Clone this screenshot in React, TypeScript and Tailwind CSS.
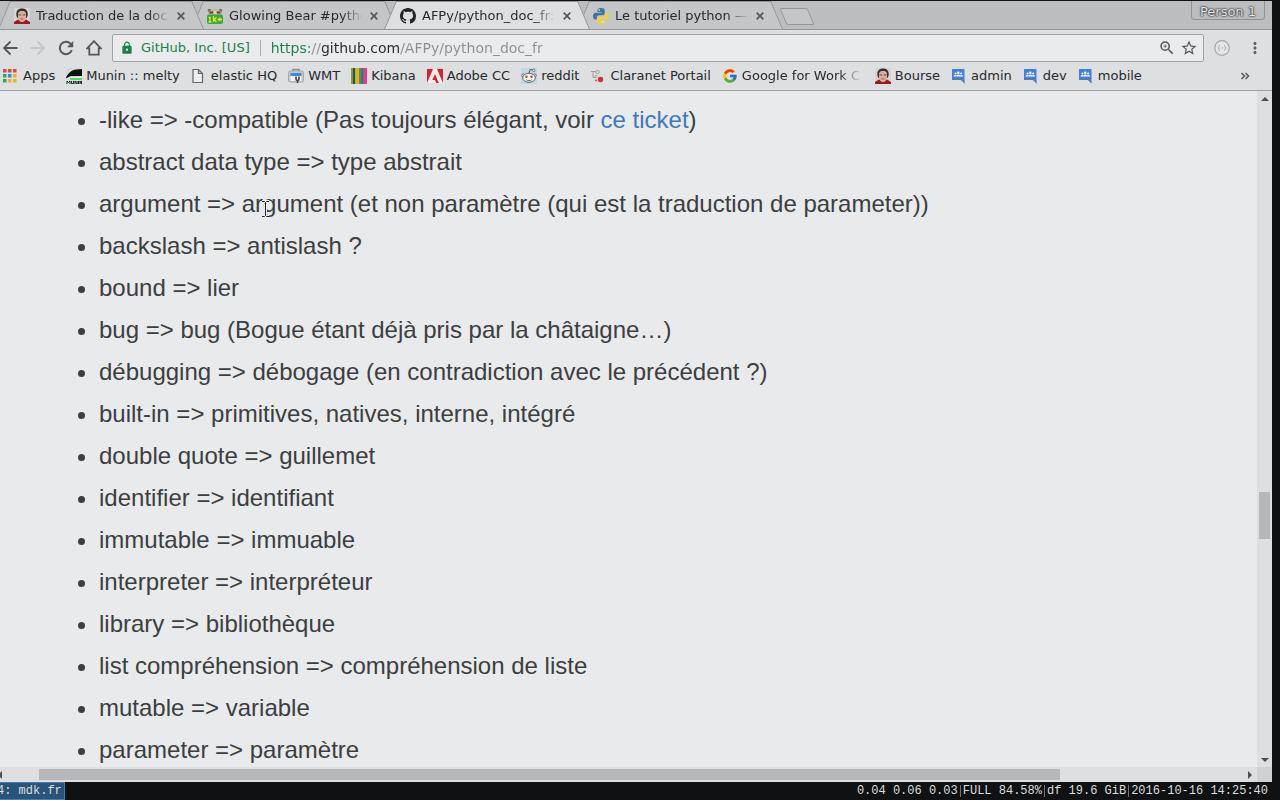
import type { ReactNode } from "react";
import { FcGoogle } from "react-icons/fc";
import { MdLock, MdMoreVert, MdStarBorder, MdZoomIn } from "react-icons/md";

const svgClass = "block size-4 shrink-0";

function FaceIcon() {
  return (
    <svg viewBox="0 0 16 16" className={svgClass} aria-hidden="true">
      <rect width="16" height="16" fill="#d5d5d6" />
      <path d="M0 16v-2l4-2.500 4 1 4-1 4 2.500v2z" fill="#9b1c20" />
      <path d="M6 10h4v3l-2 1-2-1z" fill="#b98470" />
      <path d="M2.500 8C1.500 3 4 .5 8 .5s6.500 2.500 5.500 7.500l-1 2h-9z" fill="#3a2e2e" />
      <path d="M4 5l2-2h4l2 2v5c0 2.200-2 4-4 4S4 12.200 4 10z" fill="#d9ae9d" />
      <path d="M4.500 6.300h2.700v1.200H4.500zM8.800 6.300h2.700v1.200H8.800z" fill="#7b605a" />
      <path d="M6.500 11h3" stroke="#8f4a42" strokeWidth=".8" />
    </svg>
  );
}

function BearIcon() {
  return (
    <svg viewBox="0 0 16 16" className={svgClass} aria-hidden="true">
      <circle cx="2.500" cy="2.500" r="1.800" fill="#7c6a58" />
      <circle cx="13.500" cy="2.500" r="1.800" fill="#7c6a58" />
      <path d="M1 8c0-5 3-7 7-7s7 2 7 7z" fill="#c3b29b" />
      <path d="M2.500 4.500h4M9.500 4.500h4" stroke="#584536" strokeWidth="1.800" />
      <rect x="6.500" y="3" width="3" height="3" fill="#e0d5c5" />
      <rect y="6.500" width="16" height="9.500" rx="2" fill="#3aa63c" />
      <path d="M1.500 9.500H3V14M1.500 14h3M6.500 8v6M9.500 9.500L7 11.500 9.500 14M10.500 11.500h4.500M12.800 9.500v4" fill="none" stroke="#dff022" strokeWidth="1.300" />
    </svg>
  );
}

function GithubIcon() {
  return (
    <svg viewBox="0 0 16 16" className={svgClass} aria-hidden="true">
      <path
        fill="#222527"
        d="M8 0C3.58 0 0 3.58 0 8c0 3.54 2.29 6.53 5.47 7.59.4.07.55-.17.55-.38 0-.19-.01-.82-.01-1.49-2.01.37-2.53-.49-2.69-.94-.09-.23-.48-.94-.82-1.13-.28-.15-.68-.52-.01-.53.63-.01 1.080.58 1.230.82.72 1.210 1.870.87 2.330.66.07-.52.28-.87.51-1.070-1.780-.2-3.640-.89-3.640-3.950 0-.87.31-1.590.82-2.150-.08-.2-.36-1.020.08-2.120 0 0 .67-.21 2.200.82.64-.18 1.320-.27 2-.27.68 0 1.360.09 2 .27 1.530-1.040 2.200-.82 2.200-.82.44 1.100.16 1.920.08 2.120.51.56.82 1.270.82 2.150 0 3.070-1.870 3.750-3.650 3.950.29.25.54.73.54 1.480 0 1.070-.01 1.930-.01 2.200 0 .21.15.46.55.38A8.013 8.013 0 0 0 16 8c0-4.420-3.580-8-8-8z"
      />
    </svg>
  );
}

function PythonIcon() {
  return (
    <svg viewBox="0 0 16 16" className={svgClass} aria-hidden="true">
      <path d="M8 0C5 0 4.500 1 4.500 2.200V4h4v.7H2.300C1 4.700 0 6 0 8.200s1 3.300 2.200 3.300h1.600V9.400c0-1.200 1-2.200 2.200-2.200h3.700c1.100 0 2-.9 2-2V2.200C11.700.8 10.500 0 8 0z" fill="#3b74a8" />
      <path d="M8 16c3 0 3.500-1 3.500-2.200V12h-4v-.7h6.200c1.300 0 2.300-1.300 2.300-3.500s-1-3.300-2.200-3.300h-1.600v2.100c0 1.200-1 2.200-2.200 2.200H6.300c-1.100 0-2 .9-2 2v3C4.300 15.200 5.500 16 8 16z" fill="#f4cf45" />
      <circle cx="6.200" cy="2.100" r=".8" fill="#e7ebee" />
      <circle cx="9.800" cy="13.900" r=".8" fill="#f5f0dc" />
    </svg>
  );
}

function AppsIcon() {
  const rows = [
    ["#d84b43", "#d84b43", "#d84b43"],
    ["#2fa567", "#4285dd", "#e7b527"],
    ["#2fa567", "#e7b527", "#e7b527"],
  ];
  return (
    <svg viewBox="0 0 16 16" className={svgClass} aria-hidden="true">
      {rows.map((row, y) => row.map((fill, x) => <rect key={`${x}-${y}`} x={x * 5} y={1 + y * 5} width="3.500" height="3.500" fill={fill} />))}
    </svg>
  );
}

function MuninIcon() {
  return (
    <svg viewBox="0 0 16 16" className={svgClass} aria-hidden="true">
      <rect width="16" height="16" fill="#d8dada" />
      <path d="M0 9.500C3 4 6 2 10 1.500L16 1v7H9L5 8 0 11z" fill="#111" />
      <path d="M0 11l4-2 3 1 9-1" stroke="#f1f1f1" fill="none" />
      <path d="M4 11h12" stroke="#4edf59" strokeWidth="2" />
      <path d="M1 16v-3l1.500 1.500L4 13v3M5.500 13v2.500h2V13M9 16v-3l2 3v-3M12.500 13v3M14 16v-3l1.500 3v-3" stroke="#242424" fill="none" />
    </svg>
  );
}

function PageIcon() {
  return (
    <svg viewBox="0 0 16 16" className={svgClass} aria-hidden="true">
      <path d="M2 1.500h5.500L11.500 5.500v9H2zM7.500 1.500v4h4" fill="#eceeef" stroke="#626466" strokeWidth="1.200" />
    </svg>
  );
}

function WmtIcon() {
  return (
    <svg viewBox="0 0 16 16" className={svgClass} aria-hidden="true">
      <path d="M5 3V1.500h6V3" fill="none" stroke="#8b8f92" strokeWidth="1.500" />
      <rect x=".5" y="3" width="15" height="11" rx="1.500" fill="#c6cacc" stroke="#a4a8ab" />
      <rect x="2.500" y="5" width="11" height="3" fill="#4285e8" />
      <rect x="2.500" y="8" width="11" height="5" fill="#eef0f1" />
      <path d="M8 8.500v2.500c0 1 .8 1.500 1.500 1.500s1.500-.5 1.500-1.500V8.500M9.500 12.500V15" fill="none" stroke="#3e4246" strokeWidth="1.600" />
    </svg>
  );
}

function KibanaIcon() {
  const bars = [
    ["#7b9c3f", 0, 2],
    ["#1d5a35", 2, 2],
    ["#b7ad33", 4, 1],
    ["#e6aa2d", 5, 3],
    ["#4b9a45", 8, 2],
    ["#21808d", 10, 2],
    ["#df3d88", 12, 4],
  ] as const;
  return (
    <svg viewBox="0 0 16 16" className={svgClass} aria-hidden="true">
      {bars.map(([fill, x, width]) => (
        <rect key={x} x={x} width={width} height="16" fill={fill} />
      ))}
    </svg>
  );
}

function AdobeIcon() {
  return (
    <svg viewBox="0 0 16 16" className={svgClass} aria-hidden="true">
      <rect width="16" height="14" y="1" fill="#f2eded" />
      <path d="M0 1h6L0 15zM10 1h6v14zM8 6l3.800 9H9.300l-1.200-3H5.300z" fill="#db1f2d" />
    </svg>
  );
}

function RedditIcon() {
  return (
    <svg viewBox="0 0 16 16" className={svgClass} aria-hidden="true">
      <rect width="16" height="16" fill="#c3d8e6" />
      <path d="M8 5.500l1-4 3.500.7" fill="none" stroke="#54585a" />
      <circle cx="12.700" cy="2.300" r="1.300" fill="#f5f5f5" stroke="#54585a" strokeWidth=".8" />
      <circle cx="2.300" cy="7.500" r="1.600" fill="#eee" stroke="#54585a" strokeWidth=".8" />
      <circle cx="13.700" cy="7.500" r="1.600" fill="#eee" stroke="#54585a" strokeWidth=".8" />
      <ellipse cx="8" cy="9.800" rx="6.300" ry="4.500" fill="#f4f4f4" stroke="#54585a" strokeWidth=".9" />
      <circle cx="5.500" cy="8.800" r="1.300" fill="#de4829" />
      <circle cx="10.500" cy="8.800" r="1.300" fill="#de4829" />
      <path d="M5.200 11.800c1.600 1.200 4 1.200 5.600 0" fill="none" stroke="#54585a" strokeWidth=".9" />
    </svg>
  );
}

function ClaranetIcon() {
  return (
    <svg viewBox="0 0 16 16" className={svgClass} aria-hidden="true">
      <path d="M1 3.500h5M3 3.500v6h3" fill="none" stroke="#a39c9b" />
      <circle cx="7.500" cy="4" r="1.700" fill="#dedede" stroke="#a39c9b" />
      <circle cx="6" cy="8.500" r="1.200" fill="#dedede" stroke="#a39c9b" strokeWidth=".8" />
      <circle cx="10.500" cy="11.500" r="2.700" fill="#cc3039" />
      <circle cx="6" cy="12.500" r="1.100" fill="#a86a6b" />
    </svg>
  );
}

function GroupIcon() {
  return (
    <svg viewBox="0 0 16 16" className={svgClass} aria-hidden="true">
      <path d="M1 1h12.500v14.500L10 12H1z" fill="#3f7fe6" />
      <path d="M1 12h9l3.500 3.500V13L11 10.500H1z" fill="#6c757d" opacity=".6" />
      <circle cx="4.500" cy="5.500" r="1" fill="#fff" />
      <circle cx="7.300" cy="4.700" r="1.200" fill="#fff" />
      <circle cx="10.100" cy="5.500" r="1" fill="#fff" />
      <path d="M2.500 8.500c0-2 3-2 3-.6 0-2 3.600-2 3.600 0 0-1.400 3-1.400 3 .6z" fill="#fff" />
    </svg>
  );
}

function StrokeIcon({ d }: { d: string }) {
  return (
    <svg viewBox="0 0 16 16" className={svgClass} aria-hidden="true">
      <path d={d} fill="none" stroke="currentColor" strokeWidth="1.800" />
    </svg>
  );
}

function ReloadIcon() {
  return (
    <svg viewBox="0 0 16 16" className={svgClass} aria-hidden="true">
      <path d="M13.800 10.200A6.200 6.200 0 1 1 12.600 3.800L14 5.200" fill="none" stroke="currentColor" strokeWidth="2" />
      <path d="M15.200 1v6.200H9z" fill="currentColor" />
    </svg>
  );
}

function BracesIcon() {
  return (
    <svg viewBox="0 0 16 16" className={svgClass} aria-hidden="true">
      <circle cx="8" cy="8" r="7.300" fill="#e4e6e7" stroke="#a2a4a6" strokeWidth="1.200" />
      <path d="M6 5.500c-1.500 0-.6 2.300-2 2.500 1.400.2.500 2.500 2 2.500M10 5.500c1.500 0 .6 2.300 2 2.500-1.400.2-.5 2.500-2 2.500M7.300 8h1.400" fill="none" stroke="#a2a4a6" strokeWidth="1" />
    </svg>
  );
}

type TabProps = { title: string; icon: ReactNode; active?: boolean; layer: string };

function Tab({ title, icon, active = false, layer }: TabProps) {
  const side = active ? "border-[#8f9193] bg-[#dddfe0]" : "border-[#949698] bg-[#c4c6c7]";
  return (
    <div className={`relative -mr-[13px] h-7 w-[206px] shrink ${layer}`}>
      <span className={`absolute inset-y-0 left-1.5 w-1/2 -skew-x-[23deg] border-t border-l ${side}`} />
      <span className={`absolute inset-y-0 right-1.5 w-1/2 skew-x-[23deg] border-t border-r ${side}`} />
      <div className="relative flex h-full items-center pt-0.5 pl-4">
        <button type="button" role="tab" aria-selected={active} className="flex items-center gap-1.5 text-left">
          {icon}
          <span className="w-[134px] whitespace-nowrap [mask-image:linear-gradient(to_right,black_112px,transparent_134px)]">{title}</span>
        </button>
        <button type="button" aria-label={`Close ${title}`} className="ml-[3px] flex size-4 items-center justify-center">
          <svg viewBox="0 0 8 8" className="size-2" aria-hidden="true">
            <path d="M.7.7l6.600 6.600M7.300.7L.7 7.300" stroke="#55585a" strokeWidth="1.700" />
          </svg>
        </button>
      </div>
    </div>
  );
}

const bookmarks: { label: string; icon: ReactNode; clipped?: boolean }[] = [
  { label: "Apps", icon: <AppsIcon /> },
  { label: "Munin :: melty", icon: <MuninIcon /> },
  { label: "elastic HQ", icon: <PageIcon /> },
  { label: "WMT", icon: <WmtIcon /> },
  { label: "Kibana", icon: <KibanaIcon /> },
  { label: "Adobe CC", icon: <AdobeIcon /> },
  { label: "reddit", icon: <RedditIcon /> },
  { label: "Claranet Portail", icon: <ClaranetIcon /> },
  { label: "Google for Work C", icon: <FcGoogle className={svgClass} />, clipped: true },
  { label: "Bourse", icon: <FaceIcon /> },
  { label: "admin", icon: <GroupIcon /> },
  { label: "dev", icon: <GroupIcon /> },
  { label: "mobile", icon: <GroupIcon /> },
];

const terms: ReactNode[] = [
  <>
    -like =&gt; -compatible (Pas toujours élégant, voir{" "}
    <a href="#ticket" className="text-[#4078c0]">
      ce ticket
    </a>
    )
  </>,
  "abstract data type => type abstrait",
  "argument => argument (et non paramètre (qui est la traduction de parameter))",
  "backslash => antislash ?",
  "bound => lier",
  "bug => bug (Bogue étant déjà pris par la châtaigne…)",
  "débugging => débogage (en contradiction avec le précédent ?)",
  "built-in => primitives, natives, interne, intégré",
  "double quote => guillemet",
  "identifier => identifiant",
  "immutable => immuable",
  "interpreter => interpréteur",
  "library => bibliothèque",
  "list compréhension => compréhension de liste",
  "mutable => variable",
  "parameter => paramètre",
];

function Arrow({ d, label, className }: { d: string; label: string; className: string }) {
  return (
    <button type="button" aria-label={label} className={`flex shrink-0 items-center justify-center ${className}`}>
      <svg viewBox="0 0 8 8" className="size-2" aria-hidden="true">
        <path d={d} fill="#4c4e50" />
      </svg>
    </button>
  );
}

export default function App() {
  return (
    <div className="flex h-screen flex-col overflow-hidden bg-[#101112] pt-px font-['DejaVu_Sans',sans-serif] text-[13px] text-[#27292b]">
      <div className="mr-2 flex min-h-0 flex-1 flex-col bg-[#dddfe0]">
        <header className="shrink-0">
          <div className="relative flex h-[29px] items-end border-b border-[#949698] bg-[#bbbdbf]">
            <div role="tablist" className="-ml-0.5 flex h-7 min-w-0">
              <Tab title="Traduction de la doc" icon={<FaceIcon />} layer="z-30" />
              <Tab title="Glowing Bear #pytho" icon={<BearIcon />} layer="z-20" />
              <Tab title="AFPy/python_doc_fr:" icon={<GithubIcon />} active layer="z-40" />
              <Tab title="Le tutoriel python —" icon={<PythonIcon />} layer="z-10" />
            </div>
            <button type="button" aria-label="New tab" className="mb-1 ml-[13px] h-[17px] w-7 skew-x-[23deg] rounded-xs border border-[#949698] bg-[#c4c6c7]" />
            <button
              type="button"
              className="mr-[7px] mb-auto ml-auto h-[19px] rounded-b border border-t-0 border-[#8f9193] px-2 pt-1 leading-[14px] text-[#e3e5e6] [text-shadow:0_0_1px_#333,0_0_2px_#333,0_0_2px_#333]"
            >
              Person 1
            </button>
          </div>

          <div className="flex h-9 items-center text-[#55585a]">
            <button type="button" aria-label="Back" className="ml-0.5">
              <StrokeIcon d="M15.500 8H2M8.500 1.500L2 8l6.500 6.500" />
            </button>
            <button type="button" aria-label="Forward" className="ml-3 text-[#c4c6c8]">
              <StrokeIcon d="M.5 8H14M7.500 1.500L14 8l-6.500 6.500" />
            </button>
            <button type="button" aria-label="Reload" className="ml-3">
              <ReloadIcon />
            </button>
            <button type="button" aria-label="Home" className="ml-3">
              <StrokeIcon d="M8 1.200L1.200 8.300H3.300V14.700H12.700V8.300H14.800z" />
            </button>
            <div className="ml-2.5 flex h-7 min-w-0 flex-1 items-center rounded-xs border border-[#a0a2a4] bg-[#e9ebec] pr-[5px] text-[14px]">
              <MdLock className="ml-[7px] size-3.5 text-[#19804a]" />
              <span className="ml-[7px] text-[13px] whitespace-nowrap text-[#19804a]">GitHub, Inc. [US]</span>
              <span className="mx-2.5 h-4 w-px bg-[#abadaf]" />
              <input
                type="text"
                aria-label="Address"
                defaultValue="https://github.com/AFPy/python_doc_fr"
                className="min-w-0 flex-1 bg-[linear-gradient(to_right,#19804a_41px,#8c8e90_41px,#8c8e90_51px,#27292b_51px,#27292b_129px,#8c8e90_129px)] bg-clip-text text-transparent outline-none"
              />
              <button type="button" aria-label="Zoom">
                <MdZoomIn className="size-[18px]" />
              </button>
              <button type="button" aria-label="Bookmark this page" className="ml-1">
                <MdStarBorder className="size-[18px]" />
              </button>
            </div>
            <button type="button" aria-label="JSON viewer" className="ml-2.5">
              <BracesIcon />
            </button>
            <button type="button" aria-label="Menu" className="mr-2 ml-4">
              <MdMoreVert className="size-[18px]" />
            </button>
          </div>

          <nav aria-label="Bookmarks" className="flex h-[25px] items-start gap-[11px] border-b border-[#a0a2a4] pt-0.5 pl-[3px]">
            {bookmarks.map(({ label, icon, clipped }) => (
              <a key={label} href="#bookmark" className="flex h-4 shrink-0 items-center gap-1 whitespace-nowrap">
                {icon}
                {clipped ? (
                  <span className="w-[122px] [mask-image:linear-gradient(to_right,black_97px,transparent_120px)]">{label}</span>
                ) : (
                  label
                )}
              </a>
            ))}
            <button type="button" aria-label="More bookmarks" className="mr-[22px] ml-auto h-4 text-[#55585a]">
              <svg viewBox="0 0 10 8" className="h-2 w-2.5" aria-hidden="true">
                <path d="M1.500 1l3 3-3 3M5.500 1l3 3-3 3" fill="none" stroke="currentColor" strokeWidth="1.500" />
              </svg>
            </button>
          </nav>
        </header>

        <div className="flex min-h-0 flex-1">
          <main className="relative min-w-0 flex-1 overflow-hidden bg-[#e8eaeb] pt-2 pl-[99px] font-['Liberation_Sans',sans-serif] text-[24px] leading-[42px] text-[#3c3e40]">
            <ul className="list-disc">
              {terms.map((term, i) => (
                <li key={i}>{term}</li>
              ))}
            </ul>
            <svg viewBox="0 0 9 18" className="absolute top-[109px] left-[261px] h-[18px] w-[9px]" aria-hidden="true">
              <path d="M1 1.500h2.500l1 1 1-1H8M4.500 2.500v13M1 16.500h2.500l1-1 1 1H8" fill="none" stroke="#eee" strokeWidth="3" />
              <path d="M1 1.500h2.500l1 1 1-1H8M4.500 2.500v13M1 16.500h2.500l1-1 1 1H8" fill="none" stroke="#222" strokeWidth="1" />
            </svg>
          </main>
          <div className="flex w-[15px] shrink-0 flex-col">
            <Arrow label="Scroll up" d="M0 6l4-4 4 4z" className="h-[15px]" />
            <div className="grow-[386]" />
            <div className="mx-0.5 h-[47px] bg-[#b5b7b8]" />
            <div className="grow-[213]" />
            <Arrow label="Scroll down" d="M0 2l4 4 4-4z" className="h-[15px]" />
          </div>
        </div>

        <div className="flex h-[15px] shrink-0 items-stretch">
          <Arrow label="Scroll left" d="M6 0L2 4l4 4z" className="-ml-2 w-[15px]" />
          <div className="grow-[32]" />
          <div className="my-0.5 grow-[1021] bg-[#b5b7b8]" />
          <div className="grow-[182]" />
          <Arrow label="Scroll right" d="M2 0l4 4-4 4z" className="w-[15px]" />
          <div className="w-[15px] bg-[#cfd1d2]" />
        </div>
      </div>

      <footer className="flex h-[18px] shrink-0 items-center justify-between font-['Liberation_Mono',monospace] text-[12px] leading-4 whitespace-pre text-[#dcdedf]">
        <span className="-ml-1 border border-[#4a7ea6] bg-[#285577] pr-0.5">4: mdk.fr</span>
        <div className="mr-3 flex items-center gap-0.5">
          <span>0.04 0.06 0.03</span>
          <span className="h-3 w-px bg-[#707274]" />
          <span>FULL 84.58%</span>
          <span className="h-3 w-px bg-[#707274]" />
          <span>df 19.6 GiB</span>
          <span className="h-3 w-px bg-[#707274]" />
          <span>2016-10-16 14:25:40</span>
        </div>
      </footer>
    </div>
  );
}
